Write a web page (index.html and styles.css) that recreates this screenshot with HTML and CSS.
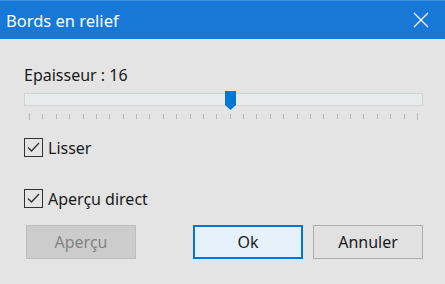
FILE: index.html
```html
<!DOCTYPE html>
<html lang="fr">
<head>
    <meta charset="UTF-8">
    <title>Bords en relief</title>
    <link rel="stylesheet" href="styles.css">
</head>
<body>

<div class="dialog">
    <div class="titlebar">
        <span class="title">Bords en relief</span>
        <svg class="close" width="16" height="16" viewBox="0 0 16 16">
            <path d="M1 1 L15 15 M15 1 L1 15" stroke="#fff" stroke-width="1.2" fill="none"/>
        </svg>
    </div>

    <div class="content">
        <div class="label">Epaisseur : 16</div>

        <div class="slider">
            <div class="track"></div>
            <svg class="thumb" width="11" height="19" viewBox="0 0 11 19">
                <path d="M0 0 H11 V14 L5.5 19 L0 14 Z" fill="#0078d7"/>
            </svg>
        </div>
        <div class="ticks" id="ticks"></div>

        <label class="check"><span class="box"><svg width="17" height="17" viewBox="0 0 17 17"><path d="M3 8.5 L6.5 12 L14 4" stroke="#333" stroke-width="1.3" fill="none"/></svg></span>Lisser</label>
        <label class="check second"><span class="box"><svg width="17" height="17" viewBox="0 0 17 17"><path d="M3 8.5 L6.5 12 L14 4" stroke="#333" stroke-width="1.3" fill="none"/></svg></span>Aperçu direct</label>

        <div class="buttons">
            <button class="btn disabled">Aperçu</button>
            <div class="spacer"></div>
            <button class="btn default">Ok</button>
            <button class="btn">Annuler</button>
        </div>
    </div>
</div>

<script>
// 30 graduations, the first and last are longer
const ticks = document.getElementById('ticks');
for (let i = 0; i < 30; i++) {
    const t = document.createElement('span');
    t.className = (i === 0 || i === 29) ? 'tick end' : 'tick';
    ticks.appendChild(t);
}
</script>

</body>
</html>
```

FILE: styles.css
```css
body {
    margin: 0;
    font-family: "Noto Sans", "Open Sans", sans-serif;
    background-color: #e4e4e4;
    color: #1a1a1a;
}
.dialog {
    width: 445px;
    height: 284px;
    overflow: hidden;
}
.titlebar {
    height: 39px;
    background-color: #1778d8;
    border-top: 1px solid #3b8fe0;
    box-sizing: border-box;
    display: flex;
    align-items: center;
    justify-content: space-between;
    padding: 0 16px 0 6px;
}
.title {
    color: #fff;
    font-size: 16.5px;
}
.close {
    display: block;
}
.content {
    padding: 0 22px 0 24px;
}
.label {
    font-size: 16px;
    line-height: 20px;
    margin-top: 26px;
}
.slider {
    position: relative;
    margin-top: 6px;
    height: 19px;
}
.track {
    position: absolute;
    left: 0;
    right: 0;
    top: 2px;
    height: 11px;
    background-color: #e8ebeb;
    border: 1px solid #d4d4d4;
}
.thumb {
    position: absolute;
    left: 201px;
    top: 0;
}
.ticks {
    display: flex;
    justify-content: space-between;
    margin: 3px 5px 0 5px;
    height: 8px;
    align-items: flex-start;
}
.tick {
    width: 1px;
    height: 5px;
    margin-top: 1px;
    background-color: #b9b9b9;
}
.tick.end {
    height: 7px;
    margin-top: 0;
}
.check {
    display: flex;
    align-items: center;
    font-size: 16px;
    margin-top: 17px;
    height: 19px;
}
.check.second {
    margin-top: 32px;
}
.box {
    width: 17px;
    height: 17px;
    border: 1px solid #333;
    margin-right: 5px;
    display: flex;
}
.buttons {
    display: flex;
    margin-top: 17px;
    margin-left: 2px;
}
.spacer {
    flex: 1;
}
.btn {
    width: 110px;
    height: 34px;
    font-family: "Noto Sans", "Open Sans", sans-serif;
    font-size: 16px;
    background-color: #e1e1e1;
    border: 1px solid #adadad;
    color: #1a1a1a;
    padding: 0;
    margin-left: 10px;
}
.btn.disabled {
    margin-left: 0;
    background-color: #cccccc;
    border-color: #bfbfbf;
    color: #838383;
}
.btn.default {
    background-color: #e5f1fb;
    border: 2px solid #0078d7;
}
```
